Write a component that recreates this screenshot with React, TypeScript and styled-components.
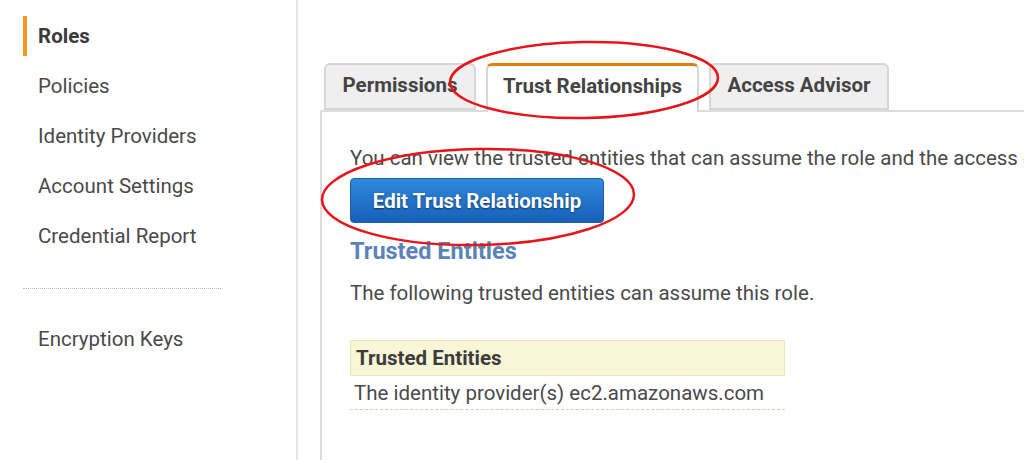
import React from "react";
import styled, { createGlobalStyle } from "styled-components";

const Global = createGlobalStyle`
  html, body { margin: 0; padding: 0; background: #fff; }
  body { font-family: Roboto, "Liberation Sans", Arial, sans-serif; color: #444; }
  #root { width: 1024px; height: 460px; overflow: hidden; position: relative; }
`;

const Page = styled.div`
  display: flex;
  width: 1024px;
  height: 460px;
  position: relative;
`;

const Sidebar = styled.nav`
  width: 296px;
  flex: none;
  border-right: 2px solid #e6e6e6;
  padding-top: 16px;
  box-sizing: content-box;
`;

const NavItem = styled.div<{ $active?: boolean }>`
  height: 40px;
  margin-left: 23px;
  margin-bottom: 10px;
  padding-left: 11px;
  display: flex;
  align-items: center;
  border-left: 4px solid ${(p) => (p.$active ? "#f7981d" : "transparent")};
  font-size: 20.5px;
  font-weight: ${(p) => (p.$active ? 700 : 400)};
  color: ${(p) => (p.$active ? "#3a3a3a" : "#4a4a4a")};
`;

const Divider = styled.div`
  margin: 32px 0 30px 23px;
  width: 198px;
  border-top: 1px dotted #b8b8b8;
`;

const Main = styled.main`
  flex: 1;
  padding: 63px 0 0 22px;
  display: flex;
  flex-direction: column;
  min-width: 0;
`;

const TabRow = styled.div`
  display: flex;
  align-items: flex-end;
  gap: 10px;
  padding-left: 4px;
  position: relative;
  z-index: 1;
`;

const Tab = styled.div<{ $active?: boolean; $w: number }>`
  width: ${(p) => p.$w}px;
  box-sizing: border-box;
  height: ${(p) => (p.$active ? 49 : 47)}px;
  margin-bottom: ${(p) => (p.$active ? -2 : 0)}px;
  display: flex;
  align-items: center;
  justify-content: center;
  padding-bottom: ${(p) => (p.$active ? 7 : 3)}px;
  font-size: 20.5px;
  font-weight: 700;
  color: #444;
  background: ${(p) => (p.$active ? "#fff" : "#efefef")};
  border: 2px solid #d6d6d6;
  border-bottom: ${(p) => (p.$active ? "none" : "2px solid #d6d6d6")};
  border-top: ${(p) => (p.$active ? "3px solid #e47f0c" : "2px solid #d6d6d6")};
  border-radius: 6px 6px 0 0;
`;

const Panel = styled.section`
  flex: 1;
  border-left: 2px solid #dcdcdc;
  border-top: 2px solid #dcdcdc;
  padding: 27px 0 0 28px;
  white-space: nowrap;
  overflow: hidden;
`;

const Intro = styled.p`
  margin: 0;
  font-size: 20.5px;
  line-height: 38px;
  color: #4a4a4a;
`;

const PrimaryButton = styled.button`
  display: block;
  width: 254px;
  height: 45px;
  margin-top: 1px;
  border: 1px solid #1b5fae;
  border-radius: 4px;
  background: linear-gradient(#3089dc, #1660b8);
  color: #fff;
  font-family: Roboto, "Liberation Sans", Arial, sans-serif;
  font-size: 20.5px;
  font-weight: 700;
  text-shadow: 0 1px 2px rgba(0, 0, 0, 0.5);
  padding: 0;
`;

const Heading = styled.h2`
  margin: 14px 0 0;
  font-size: 23.5px;
  line-height: 28px;
  font-weight: 700;
  color: #5a84b8;
`;

const SubText = styled.p`
  margin: 15px 0 0;
  font-size: 20.5px;
  line-height: 26px;
  color: #4a4a4a;
`;

const Table = styled.div`
  width: 435px;
  margin-top: 34px;
`;

const HeadCell = styled.div`
  height: 36px;
  box-sizing: border-box;
  background: #f8f6d6;
  border: 1px solid #ece8b4;
  padding-left: 5px;
  display: flex;
  align-items: center;
  font-size: 20.5px;
  font-weight: 700;
  color: #3c3c3c;
`;

const BodyCell = styled.div`
  height: 34px;
  box-sizing: border-box;
  padding-left: 4px;
  display: flex;
  align-items: center;
  font-size: 20.5px;
  color: #4a4a4a;
  border-bottom: 1px dashed #cfd2a6;
`;

const Annotations = styled.svg`
  position: absolute;
  left: 0;
  top: 0;
  pointer-events: none;
  z-index: 5;
`;

export default function App() {
  const nav = [
    "Roles",
    "Policies",
    "Identity Providers",
    "Account Settings",
    "Credential Report",
  ];
  return (
    <>
      <Global />
      <Page>
        <Sidebar>
          {nav.map((n, i) => (
            <NavItem key={n} $active={i === 0}>
              {n}
            </NavItem>
          ))}
          <Divider />
          <NavItem>Encryption Keys</NavItem>
        </Sidebar>
        <Main>
          <TabRow>
            <Tab $w={152}>Permissions</Tab>
            <Tab $w={213} $active>
              Trust Relationships
            </Tab>
            <Tab $w={180}>Access Advisor</Tab>
          </TabRow>
          <Panel>
            <Intro>
              You can view the trusted entities that can assume the role and the access conditions for the role.
            </Intro>
            <PrimaryButton>Edit Trust Relationship</PrimaryButton>
            <Heading>Trusted Entities</Heading>
            <SubText>The following trusted entities can assume this role.</SubText>
            <Table>
              <HeadCell>Trusted Entities</HeadCell>
              <BodyCell>The identity provider(s) ec2.amazonaws.com</BodyCell>
            </Table>
          </Panel>
        </Main>
        <Annotations width="1024" height="460" viewBox="0 0 1024 460">
          <ellipse cx="584" cy="80" rx="134" ry="38" fill="none" stroke="#e8141b" strokeWidth="2.5" transform="rotate(-1 584 80)" />
          <ellipse cx="478" cy="197" rx="156" ry="48" fill="none" stroke="#e8141b" strokeWidth="2.5" transform="rotate(-1 478 197)" />
        </Annotations>
      </Page>
    </>
  );
}
